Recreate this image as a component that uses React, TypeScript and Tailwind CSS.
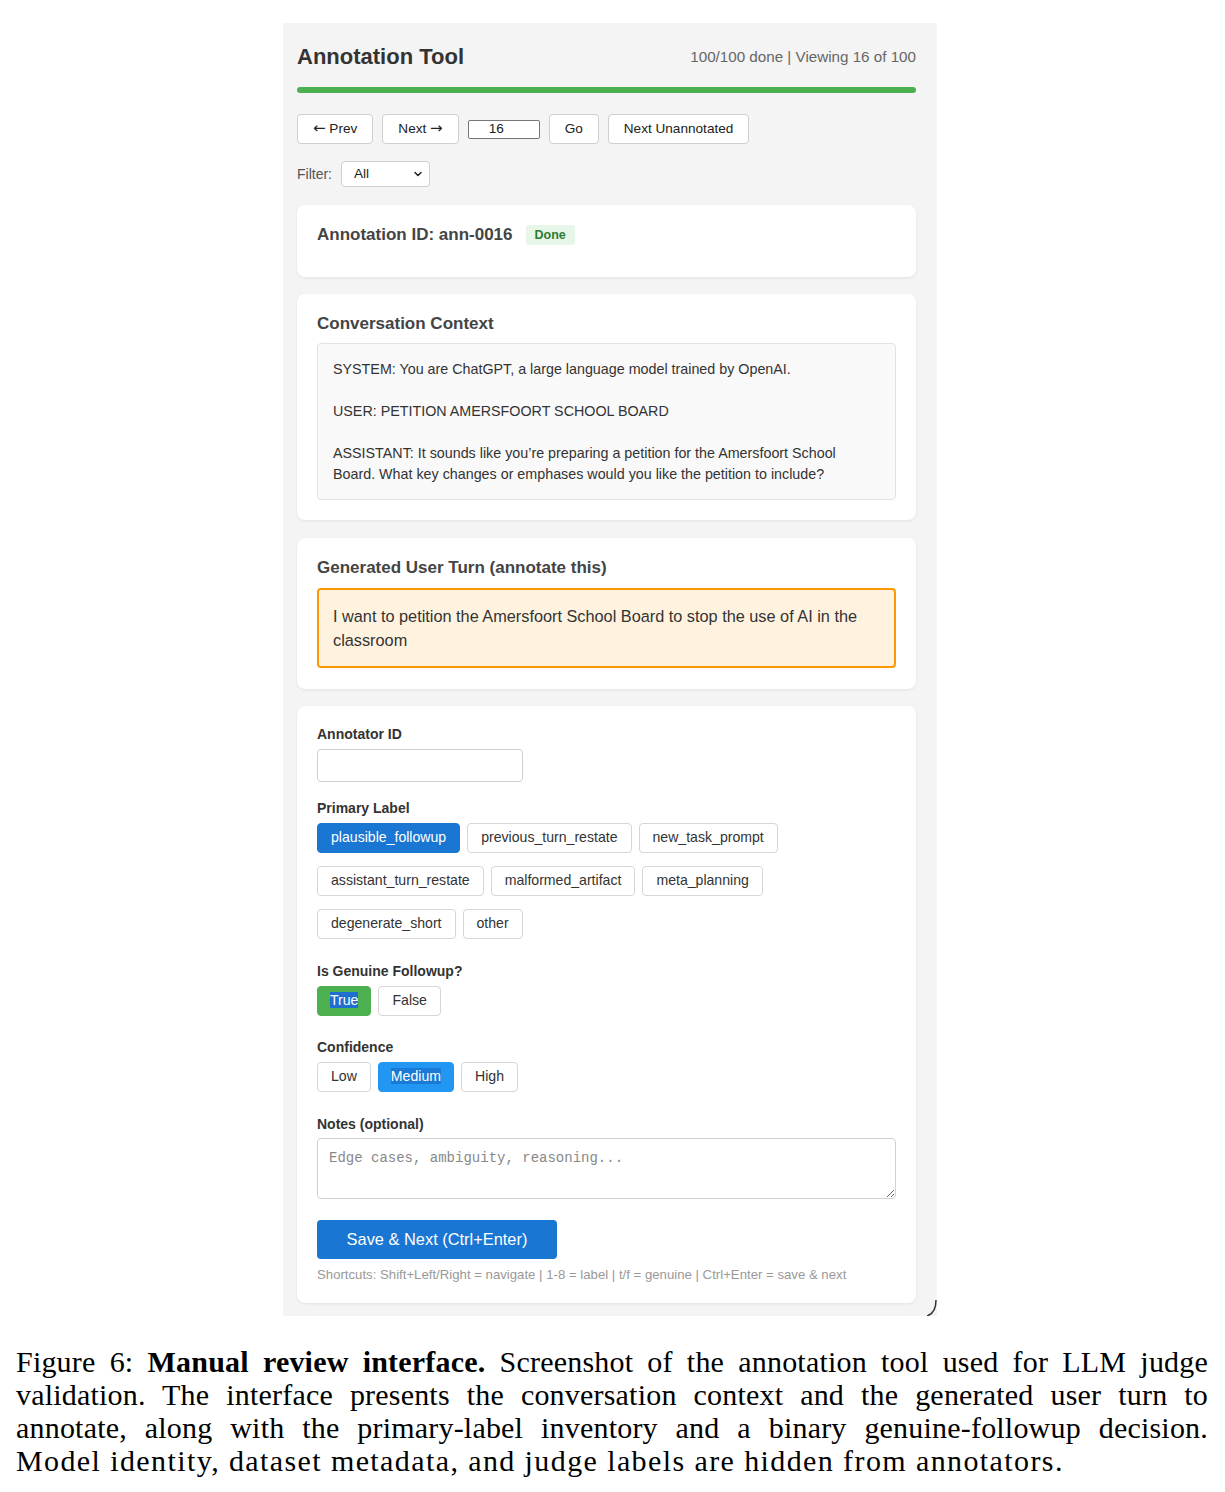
import { ChevronDown } from "lucide-react";

const rowOne = ["plausible_followup", "previous_turn_restate", "new_task_prompt"];
const rowTwo = ["assistant_turn_restate", "malformed_artifact", "meta_planning"];
const rowThree = ["degenerate_short", "other"];

function NavButton({ children }: { children: React.ReactNode }) {
  return (
    <button className="h-[30px] rounded-[4px] border border-[#cfcfcf] bg-white px-[15px] text-[13.6px] text-[#222]">
      {children}
    </button>
  );
}

function Arrow({ char }: { char: string }) {
  return <span className="font-['DejaVu_Sans',sans-serif] text-[15px] leading-none">{char}</span>;
}

function Chip({ label, active = false }: { label: string; active?: boolean }) {
  return (
    <button
      className={
        active
          ? "h-[30px] rounded-[4px] border border-[#1976d2] bg-[#1976d2] px-[13px] text-[14.1px] text-white"
          : "h-[30px] rounded-[4px] border border-[#d6d6d6] bg-white px-[13px] text-[14.1px] text-[#333]"
      }
    >
      {label}
    </button>
  );
}

function Card({ className, children }: { className: string; children: React.ReactNode }) {
  return (
    <div className={"rounded-[8px] bg-white px-[20px] shadow-[0_1px_3px_rgba(0,0,0,0.08)] " + className}>
      {children}
    </div>
  );
}

export default function App() {
  return (
    <div className="min-h-[1492px] w-[1225px] bg-white font-['Liberation_Sans',Arial,sans-serif]">
      {/* 画面キャプチャ部分 */}
      <div className="relative ml-[283px] mt-[23px] w-[654px] bg-[#f4f4f4] pl-[14px] pr-[21px] pt-[20px] pb-[13px]">
        <div className="flex h-[28px] items-center justify-between">
          <h1 className="text-[22px] font-bold leading-[28px] text-[#333]">Annotation Tool</h1>
          <span className="text-[15.2px] text-[#666]">100/100 done | Viewing 16 of 100</span>
        </div>

        <div className="mt-[16px] h-[6px] rounded-full bg-[#4caf50]" />

        <div className="mt-[21px] flex items-center gap-[9px]">
          <NavButton>
            <Arrow char="←" /> Prev
          </NavButton>
          <NavButton>
            Next <Arrow char="→" />
          </NavButton>
          <input
            defaultValue="16"
            className="h-[19px] w-[72px] rounded-[2px] border border-[#767676] bg-white pl-[20px] text-[13.6px] text-[#222]"
          />
          <NavButton>Go</NavButton>
          <NavButton>Next Unannotated</NavButton>
        </div>

        <div className="mt-[17px] flex h-[26px] items-center gap-[9px]">
          <span className="text-[14px] text-[#555]">Filter:</span>
          <div className="relative">
            <select className="h-[26px] w-[89px] appearance-none rounded-[4px] border border-[#d0d0d0] bg-white pl-[12px] text-[13.6px] text-[#222]">
              <option>All</option>
            </select>
            <ChevronDown className="pointer-events-none absolute right-[6px] top-[7px] h-[12px] w-[12px] text-[#222]" strokeWidth={3} />
          </div>
        </div>

        <Card className="mt-[18px] pt-[20px] pb-[32px]">
          <div className="flex h-[20px] items-center">
            <h3 className="text-[17px] font-bold leading-[20px] text-[#444]">Annotation ID: ann-0016</h3>
            <span className="ml-[13px] flex h-[20px] items-center rounded-[3px] bg-[#e8f5e9] px-[9px] text-[12.5px] font-bold text-[#2e7d32]">
              Done
            </span>
          </div>
        </Card>

        <Card className="mt-[17px] pt-[20px] pb-[20px]">
          <h3 className="text-[17px] font-bold leading-[20px] text-[#444]">Conversation Context</h3>
          <div className="mt-[9px] whitespace-pre-wrap rounded-[4px] border border-[#e2e2e2] bg-[#f9f9f9] px-[15px] py-[14.5px] text-[14.3px] leading-[21px] text-[#333]">
            {"SYSTEM: You are ChatGPT, a large language model trained by OpenAI.\n\nUSER: PETITION AMERSFOORT SCHOOL BOARD\n\nASSISTANT: It sounds like you’re preparing a petition for the Amersfoort School Board. What key changes or emphases would you like the petition to include?"}
          </div>
        </Card>

        <Card className="mt-[18px] pt-[20px] pb-[21px]">
          <h3 className="text-[17px] font-bold leading-[20px] text-[#444]">Generated User Turn (annotate this)</h3>
          <div className="mt-[10px] rounded-[4px] border-2 border-[#ff9800] bg-[#fff3e0] px-[14px] pt-[14px] pb-[14px] text-[16.3px] leading-[24px] text-[#333]">
            I want to petition the Amersfoort School Board to stop the use of AI in the classroom
          </div>
        </Card>

        <Card className="mt-[17px] pt-[20px] pb-[21px]">
          <div className="text-[14px] font-bold leading-[16px] text-[#333]">Annotator ID</div>
          <input className="mt-[7px] block h-[33px] w-[206px] rounded-[4px] border border-[#cfcfcf] bg-white" />

          <div className="mt-[18px] text-[14px] font-bold leading-[16px] text-[#333]">Primary Label</div>
          <div className="mt-[7px] flex flex-col gap-[13px]">
            <div className="flex gap-[7px]">
              {rowOne.map((l, i) => (
                <Chip key={l} label={l} active={i === 0} />
              ))}
            </div>
            <div className="flex gap-[7px]">
              {rowTwo.map((l) => (
                <Chip key={l} label={l} />
              ))}
            </div>
            <div className="flex gap-[7px]">
              {rowThree.map((l) => (
                <Chip key={l} label={l} />
              ))}
            </div>
          </div>

          <div className="mt-[24px] text-[14px] font-bold leading-[16px] text-[#333]">Is Genuine Followup?</div>
          <div className="mt-[7px] flex gap-[7px]">
            <button className="h-[30px] rounded-[4px] border border-[#4caf50] bg-[#4caf50] px-[12px] text-[14.1px] text-white">
              <span className="bg-[#1f6fd1]">True</span>
            </button>
            <Chip label="False" />
          </div>

          <div className="mt-[23px] text-[14px] font-bold leading-[16px] text-[#333]">Confidence</div>
          <div className="mt-[7px] flex gap-[7px]">
            <Chip label="Low" />
            <button className="h-[30px] rounded-[4px] border border-[#2196f3] bg-[#2196f3] px-[12px] text-[14.1px] text-white">
              <span className="bg-[#1a7ad6]">Medium</span>
            </button>
            <Chip label="High" />
          </div>

          <div className="mt-[24px] text-[14px] font-bold leading-[16px] text-[#333]">Notes (optional)</div>
          <textarea
            placeholder="Edge cases, ambiguity, reasoning..."
            className="mt-[6px] block h-[61px] w-full rounded-[4px] border border-[#d0d0d0] bg-white px-[11px] py-[9px] font-['Liberation_Mono',monospace] text-[14px] placeholder:text-[#888]"
          />

          <button className="mt-[21px] h-[39px] w-[240px] rounded-[4px] bg-[#1976d2] text-[16.4px] text-white">
            Save &amp; Next (Ctrl+Enter)
          </button>
          <div className="mt-[9px] text-[13.2px] leading-[14px] text-[#999]">
            Shortcuts: Shift+Left/Right = navigate | 1-8 = label | t/f = genuine | Ctrl+Enter = save &amp; next
          </div>
        </Card>

        {/* ウィンドウの角 */}
        <svg className="absolute bottom-0 right-0 h-[16px] w-[10px]" viewBox="0 0 10 16">
          <path d="M9 0 Q9 13 0 16" fill="none" stroke="#333" strokeWidth="1.5" />
        </svg>
      </div>

      {/* キャプション */}
      <div className="mt-[29px] ml-[16px] w-[1192px] font-['Liberation_Serif',serif] text-[30px] leading-[33px] text-black">
        <div className="text-justify tracking-[0.2px] [text-align-last:justify]">
          Figure 6: <b>Manual review interface.</b> Screenshot of the annotation tool used for LLM judge
        </div>
        <div className="text-justify tracking-[0.2px] [text-align-last:justify]">
          validation. The interface presents the conversation context and the generated user turn to
        </div>
        <div className="text-justify tracking-[0.2px] [text-align-last:justify]">
          annotate, along with the primary-label inventory and a binary genuine-followup decision.
        </div>
        <div className="tracking-[1.4px]">Model identity, dataset metadata, and judge labels are hidden from annotators.</div>
      </div>
    </div>
  );
}
